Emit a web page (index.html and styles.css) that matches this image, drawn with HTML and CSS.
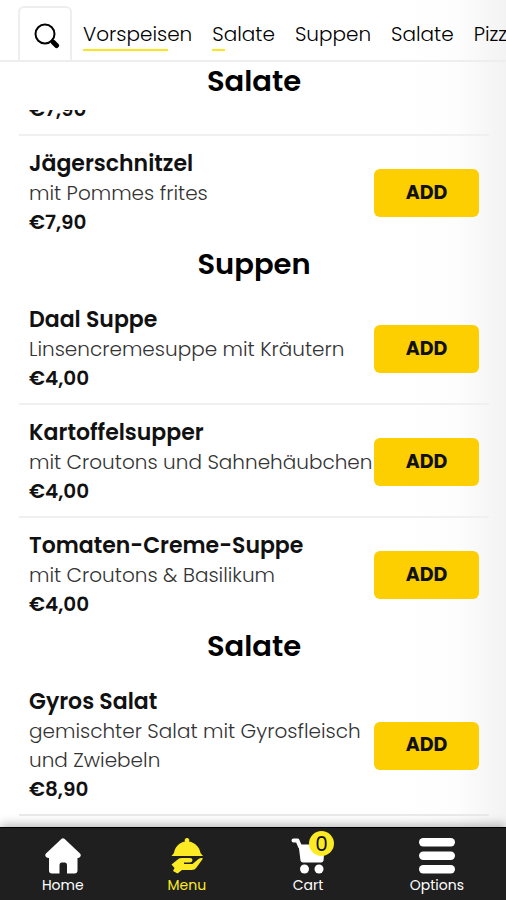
FILE: index.html
```html
<!DOCTYPE html>
<html lang="de">
<head>
  <meta charset="utf-8">
  <meta name="viewport" content="width=device-width, initial-scale=1">
  <title>Menu</title>
  <link rel="stylesheet" href="styles.css">
</head>
<body>
  <header class="topbar">
    <button class="search" aria-label="Suche">
      <svg viewBox="0 0 26 26" width="26" height="26">
        <circle cx="11" cy="11" r="9.5" fill="none" stroke="#000" stroke-width="2"/>
        <path d="M17 17l2 2" stroke="#000" stroke-width="2"/>
        <path d="M19.5 19.5l3 3" stroke="#000" stroke-width="5" stroke-linecap="round"/>
      </svg>
    </button>
    <nav class="categories">
      <a href="#vorspeisen">Vorspeisen<span class="progress" style="width: 78%"></span></a>
      <a href="#salate">Salate<span class="progress" style="width: 21%"></span></a>
      <a href="#suppen">Suppen</a>
      <a href="#salate2">Salate</a>
      <a href="#pizza">Pizza</a>
    </nav>
  </header>

  <main class="menu">
    <section id="salate">
      <h2 class="title current">Salate</h2>
      <div class="item passed">
        <p class="price">€7,90</p>
      </div>
      <div class="item">
        <div class="info">
          <h3 class="name">Jägerschnitzel</h3>
          <p class="description">mit Pommes frites</p>
          <p class="price">€7,90</p>
        </div>
        <button class="add">ADD</button>
      </div>
    </section>

    <section id="suppen">
      <h2 class="title">Suppen</h2>
      <div class="item">
        <div class="info">
          <h3 class="name">Daal Suppe</h3>
          <p class="description">Linsencremesuppe mit Kräutern</p>
          <p class="price">€4,00</p>
        </div>
        <button class="add">ADD</button>
      </div>
      <div class="item">
        <div class="info">
          <h3 class="name">Kartoffelsupper</h3>
          <p class="description">mit Croutons und Sahnehäubchen</p>
          <p class="price">€4,00</p>
        </div>
        <button class="add">ADD</button>
      </div>
      <div class="item">
        <div class="info">
          <h3 class="name">Tomaten-Creme-Suppe</h3>
          <p class="description">mit Croutons &amp; Basilikum</p>
          <p class="price">€4,00</p>
        </div>
        <button class="add">ADD</button>
      </div>
    </section>

    <section id="salate2" class="more">
      <h2 class="title">Salate</h2>
      <div class="item">
        <div class="info">
          <h3 class="name">Gyros Salat</h3>
          <p class="description">gemischter Salat mit Gyrosfleisch und Zwiebeln</p>
          <p class="price">€8,90</p>
        </div>
        <button class="add">ADD</button>
      </div>
    </section>
  </main>

  <nav class="bottom-nav">
    <a href="#home">
      <svg viewBox="0 0 36 36" width="36" height="36" fill="#fff">
        <path d="M16.6 .8Q18 -.4 19.4 .8L35 15.5Q36.4 17 35.2 18.8Q34.4 20 32.5 20V32.5Q32.5 35.5 29.5 35.5H22V27Q22 24.5 20 24.5H16.5Q14.5 24.5 14.5 27V35.5H7Q4 35.5 4 32.5V20Q1.8 20 .9 18.8Q-.4 17 1 15.5Z"/>
      </svg>
      <span>Home</span>
    </a>
    <a href="#menu" class="active">
      <svg viewBox="0 0 36 36" width="36" height="36" fill="#fcea25">
        <path d="M18 0A2.3 2.3 0 0 1 20 3.5C26 4.5 30.5 9 31.5 15L34 18H2.5L5 15C6 9 10 4.5 16 3.5A2.3 2.3 0 0 1 18 0Z"/>
        <path d="M2.5 26.5L10 20.5Q11 20 12.5 20H21Q23.5 20 23.5 22T21 24.5H15V26H23.5L29.5 21Q32 19.5 34 20.5L27.5 29.5Q26 32 22.5 32H13L8.5 35.5L4 33L5.5 30Z"/>
      </svg>
      <span>Menu</span>
    </a>
    <a href="#cart">
      <span class="cart-icon">
        <svg viewBox="0 0 36 36" width="36" height="36" fill="#fff">
          <path d="M3.5 2.5H7.5L10 8.5" fill="none" stroke="#fff" stroke-width="4" stroke-linecap="round" stroke-linejoin="round"/>
          <path d="M8.5 6.5H35L33.5 22.5Q33 24.5 31 24.5H13Q11 24.5 10.5 22.5Z"/>
          <circle cx="14.5" cy="31" r="4.5"/>
          <circle cx="29" cy="31" r="4.5"/>
        </svg>
        <span class="badge">0</span>
      </span>
      <span>Cart</span>
    </a>
    <a href="#options">
      <svg viewBox="0 0 36 36" width="36" height="36" fill="#fff">
        <rect x="0" y="0" width="36" height="8.5" rx="4.2"/>
        <rect x="0" y="13.5" width="36" height="8.5" rx="4.2"/>
        <rect x="0" y="27" width="36" height="8.5" rx="4.2"/>
      </svg>
      <span>Options</span>
    </a>
  </nav>
</body>
</html>
```

FILE: styles.css
```css
*{
  box-sizing: border-box;
}

body{
  margin: 0;
  height: 100vh;
  display: flex;
  flex-direction: column;
  overflow: hidden;
  font-family: Poppins, Inter, sans-serif;
  color: #111;
  background: linear-gradient(to left, #f3f3f3, #fdfdfd 50px, #fff 100px);
}

h2, h3, p{
  margin: 0;
}

a{
  text-decoration: none;
}

.topbar{
  flex: none;
  display: flex;
  align-items: flex-end;
  padding: 6px 0 0 18px;
  border-bottom: 2px solid #eee;
}

.search{
  flex: none;
  width: 54px;
  height: 54px;
  display: flex;
  align-items: center;
  justify-content: center;
  padding: 4px 0 0 3px;
  background: #fff;
  border: 2px solid #eee;
  border-bottom: none;
  border-radius: 6px 6px 0 0;
  cursor: pointer;
}

.categories{
  display: flex;
  gap: 20px;
  height: 54px;
  padding: 13px 0 0 11px;
  overflow: hidden;
}
.categories a{
  flex: none;
  color: #000;
  font-size: 20px;
  font-weight: 300;
  line-height: 30px;
}

.progress{
  display: block;
  height: 2px;
  background-color: #fce51e;
}

.menu{
  flex: 1;
  min-height: 0;
  overflow: hidden;
  padding: 0 17px 0 19px;
}

.title{
  font-size: 29px;
  font-weight: 600;
  line-height: 55px;
  text-align: center;
  color: #000;
}

.current{
  line-height: 38px;
  padding-bottom: 10px;
}

.item{
  display: flex;
  align-items: center;
  justify-content: space-between;
  padding: 13px 10px 10px;
  border-bottom: 2px solid #f0f0f0;
}
.item:last-child{
  padding-bottom: 0;
  border-bottom: none;
}
.more .item:last-child{
  padding-bottom: 10px;
  border-bottom: 2px solid #eaeaea;
}

/* item scrolled behind the section title */
.passed{
  height: 26px;
  align-items: flex-end;
  padding-top: 0;
  overflow: hidden;
}

.name{
  font-size: 22px;
  font-weight: 600;
  line-height: 30px;
}

.description{
  color: #333;
  font-size: 20px;
  font-weight: 300;
  line-height: 29px;
}

.price{
  font-size: 20px;
  font-weight: 600;
  line-height: 29px;
}

.add{
  flex: none;
  width: 105px;
  height: 48px;
  padding: 0 0 2px;
  border: none;
  border-radius: 6px;
  background-color: #fdce00;
  color: #111;
  font-family: inherit;
  font-size: 19px;
  font-weight: 700;
  cursor: pointer;
}

.bottom-nav{
  flex: none;
  position: relative;
  display: flex;
  justify-content: space-around;
  height: 73px;
  padding-top: 10px;
  background-color: #1f1f1f;
  border-top: 1px solid #000;
  box-shadow: 0 -2px 10px rgba(0, 0, 0, 0.3);
}
.bottom-nav a{
  display: flex;
  flex-direction: column;
  align-items: center;
  color: #fff;
  font-size: 14px;
  line-height: 22px;
}
.bottom-nav .active{
  color: #fcea25;
}
.bottom-nav svg{
  display: block;
}

.cart-icon{
  position: relative;
}

.badge{
  position: absolute;
  top: -7px;
  right: -8px;
  width: 25px;
  height: 25px;
  border-radius: 50%;
  background-color: #fcea25;
  color: #111;
  font-size: 20px;
  line-height: 26px;
  text-align: center;
}
```
